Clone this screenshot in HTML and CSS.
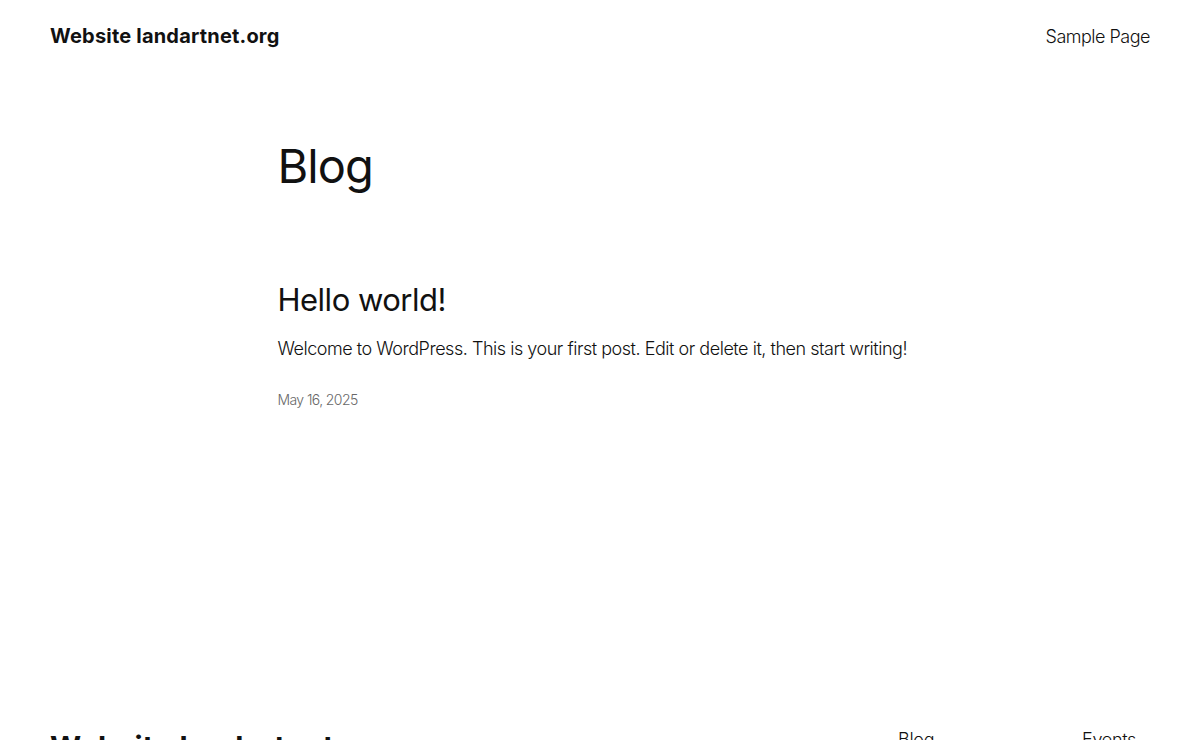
FILE: index.html
```html
<!DOCTYPE html>
<html lang="en">
<head>
<meta charset="utf-8">
<title>Blog – Website landartnet.org</title>
<link rel="stylesheet" href="styles.css">
</head>
<body>
<header class="site-header">
  <a class="site-title" href="#">Website landartnet.org</a>
  <nav class="main-nav"><a href="#">Sample Page</a></nav>
</header>
<main class="content">
  <h1 class="page-title">Blog</h1>
  <article class="post">
    <h2 class="post-title"><a href="#">Hello world!</a></h2>
    <p class="excerpt">Welcome to WordPress. This is your first post. Edit or delete it, then start writing!</p>
    <time class="post-date">May 16, 2025</time>
  </article>
</main>
<footer class="site-footer">
  <a class="footer-title" href="#">Website landartnet.org</a>
  <nav class="footer-nav">
    <div class="footer-col"><a href="#">Blog</a><a href="#">About</a><a href="#">FAQs</a><a href="#">Authors</a></div>
    <div class="footer-col"><a href="#">Events</a><a href="#">Shop</a><a href="#">Patterns</a><a href="#">Themes</a></div>
  </nav>
</footer>
</body>
</html>
```
FILE: styles.css
```css
* { box-sizing: border-box; }
html, body { margin: 0; padding: 0; }
body {
  background: #ffffff;
  color: #111111;
  font-family: Inter, "Noto Sans", "Liberation Sans", sans-serif;
  font-weight: 300;
}
a { color: inherit; text-decoration: none; }

.site-header {
  display: flex;
  justify-content: space-between;
  align-items: center;
  padding: 11px 50px 0 50px;
  height: 61px;
}
.site-title {
  font-size: 20px;
  font-weight: 700;
  letter-spacing: 0.2px;
}
.main-nav a {
  font-size: 18px;
  font-weight: 300;
  letter-spacing: -0.5px;
}

.content {
  width: 645px;
  margin: 0 auto;
  padding-top: 79px;
  min-height: 640px;
}
.page-title {
  margin: 0;
  font-size: 47px;
  font-weight: 400;
  line-height: 1.125;
  letter-spacing: -0.9px;
}
.post { margin-top: 90px; }
.post-title {
  margin: 0;
  font-size: 31px;
  font-weight: 400;
  line-height: 1.125;
  letter-spacing: -0.5px;
}
.excerpt {
  margin: 18px 0 0 0;
  font-size: 18px;
  line-height: 1.4;
  letter-spacing: -0.47px;
}
.post-date {
  display: block;
  margin-top: 30px;
  font-size: 14px;
  color: #686868;
  letter-spacing: -0.6px;
}

.site-footer {
  display: flex;
  justify-content: space-between;
  align-items: flex-start;
  padding: 28px 50px 60px 50px;
}
.footer-title {
  font-size: 30px;
  font-weight: 700;
  line-height: 1.2;
  letter-spacing: 0.3px;
}
.footer-nav {
  display: flex;
  gap: 116px;
}
.footer-col {
  display: flex;
  flex-direction: column;
  gap: 12px;
  width: 68px;
  font-size: 18px;
  line-height: 1.2;
  letter-spacing: -0.3px;
}
```
